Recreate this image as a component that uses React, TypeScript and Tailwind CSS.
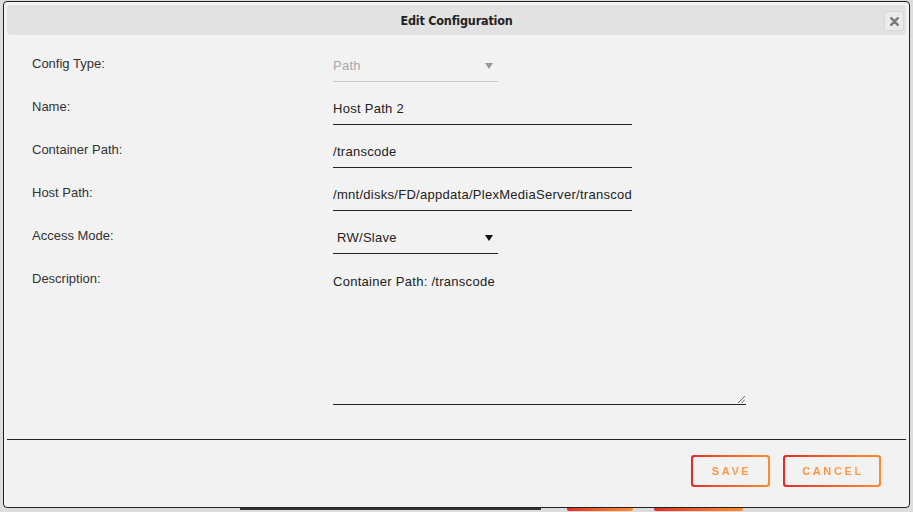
const rows = [
  { label: 'Config Type:', kind: 'select-disabled', value: 'Path' },
  { label: 'Name:', kind: 'input', value: 'Host Path 2' },
  { label: 'Container Path:', kind: 'input', value: '/transcode' },
  { label: 'Host Path:', kind: 'input', value: '/mnt/disks/FD/appdata/PlexMediaServer/transcode' },
  { label: 'Access Mode:', kind: 'select', value: 'RW/Slave' },
];

const Caret = ({ color }: { color: string }) => (
  <svg width="8" height="6" viewBox="0 0 8 6" className="shrink-0">
    <path d="M0 0 L8 0 L4 6 Z" fill={color} />
  </svg>
);

const GradientButton = ({ label, width }: { label: string; width: string }) => (
  <button className={`${width} h-[32px] rounded-[3px] p-[2px] bg-gradient-to-r from-[#e22828] to-[#ff8c2f]`}>
    <span className="flex h-full w-full items-center justify-center rounded-[2px] bg-[#f2f2f2]">
      <span className="bg-gradient-to-r from-[#ff8c2f] to-[#ff9e52] bg-clip-text text-[11px] font-bold tracking-[2.6px] text-transparent pl-[2px]">
        {label}
      </span>
    </span>
  </button>
);

export default function App() {
  return (
    <div className="w-[913px] h-[512px] overflow-hidden bg-[#dcdcdc] font-['Liberation_Sans',Arial,sans-serif]">
      <div className="ml-[3px] mt-[1px] w-[907px] h-[507px] rounded-[4px] border border-[#222] bg-[#f2f2f2] p-[3px]">
        {/* title bar */}
        <div className="relative flex h-[30px] items-center justify-center rounded-[4px] bg-[#e2e2e2]">
          <span className="pt-[2px] font-['DejaVu_Sans_Condensed','Liberation_Sans',sans-serif] text-[12.5px] font-bold text-[#222] tracking-[-0.2px]">
            Edit Configuration
          </span>
          <button className="absolute right-[2px] top-[6px] flex h-[20px] w-[20px] items-center justify-center rounded-[3px] border border-[#d6d6d6] bg-[#ebebeb]">
            <svg width="9" height="9" viewBox="0 0 9 9">
              <path d="M1.2 1.2 L7.8 7.8 M7.8 1.2 L1.2 7.8" stroke="#7a7a7a" strokeWidth="2.4" strokeLinecap="round" />
            </svg>
          </button>
        </div>

        {/* form */}
        <div className="mt-[14px] pl-[25px]">
          {rows.map((r) => (
            <div key={r.label} className="flex h-[43px] items-start">
              <div className="w-[301px] pt-[5px] text-[13px] leading-5 text-[#333]">{r.label}</div>
              {r.kind === 'input' && (
                <div className="flex h-[33px] w-[299px] items-center overflow-hidden whitespace-nowrap border-b border-[#222] pt-[2px] text-[13px] tracking-[0.28px] text-[#222]">
                  {r.value}
                </div>
              )}
              {r.kind === 'select-disabled' && (
                <div className="flex h-[33px] w-[165px] items-center justify-between border-b border-[#c8c8c8] pt-[2px] pr-[5px] text-[13px] tracking-[0.28px] text-[#a8a8a8]">
                  <span>{r.value}</span>
                  <Caret color="#9a9a9a" />
                </div>
              )}
              {r.kind === 'select' && (
                <div className="flex h-[33px] w-[165px] items-center justify-between border-b border-[#222] pt-[2px] pl-[4px] pr-[5px] text-[13px] tracking-[0.28px] text-[#222]">
                  <span>{r.value}</span>
                  <Caret color="#111" />
                </div>
              )}
            </div>
          ))}

          {/* description */}
          <div className="flex items-start">
            <div className="w-[301px] pt-[5px] text-[13px] leading-5 text-[#333]">Description:</div>
            <div className="relative h-[141px] w-[413px] border-b border-[#222] pt-[10px] text-[13px] leading-4 tracking-[0.28px] text-[#222]">
              Container Path: /transcode
              <svg width="8" height="8" viewBox="0 0 8 8" className="absolute bottom-[1px] right-[1px]">
                <path d="M1 8 L8 1 M4.5 8 L8 4.5" stroke="#666" strokeWidth="1" />
              </svg>
            </div>
          </div>
        </div>

        {/* divider */}
        <div className="mt-[34px] h-px bg-[#222]" />

        {/* actions */}
        <div className="mt-[15px] flex justify-end gap-[13px] pr-[25px]">
          <GradientButton label="SAVE" width="w-[79px]" />
          <GradientButton label="CANCEL" width="w-[98px]" />
        </div>
      </div>

      {/* underlying page peeking out below the dialog */}
      <div className="flex items-start">
        <div className="ml-[240px] h-[2px] w-[301px] bg-[#333]" />
        <div className="ml-[26px] h-[3px] w-[66px] rounded-b-[2px] bg-gradient-to-r from-[#e22828] to-[#ff8c2f]" />
        <div className="ml-[21px] h-[3px] w-[89px] rounded-b-[2px] bg-gradient-to-r from-[#e22828] to-[#ff8c2f]" />
      </div>
    </div>
  );
}
